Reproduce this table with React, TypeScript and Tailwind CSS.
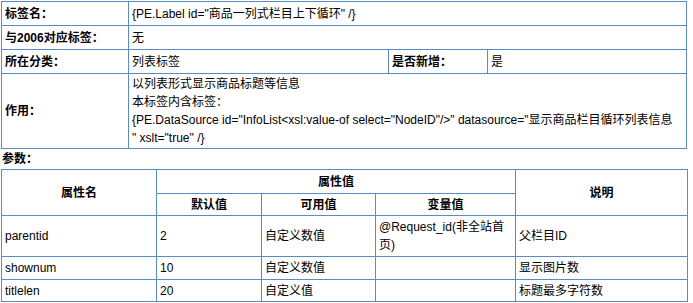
import React from "react";

const c = "border border-[#5b8cbf] px-[3px] align-middle";
const h = "border border-[#5b8cbf] px-[3px] align-middle text-center font-bold";

export default function App() {
  return (
    <div className="bg-white text-black font-['Liberation_Sans','Noto_Sans_CJK_SC',sans-serif] text-[12px] leading-[18px] pl-[1px] pt-[1px] w-[693px] h-[303px]">
      <table className="border-collapse table-fixed w-[685px]">
        <colgroup>
          <col className="w-[127px]" />
          <col className="w-[260px]" />
          <col className="w-[99px]" />
          <col className="w-[199px]" />
        </colgroup>
        <tbody>
          <tr className="h-[24px]">
            <td className={c + " font-bold"}>标签名：</td>
            <td className={c} colSpan={3}>{'{PE.Label id="商品一列式栏目上下循环" /}'}</td>
          </tr>
          <tr className="h-[24px]">
            <td className={c + " font-bold"}>与2006对应标签：</td>
            <td className={c} colSpan={3}>无</td>
          </tr>
          <tr className="h-[24px]">
            <td className={c + " font-bold"}>所在分类：</td>
            <td className={c}>列表标签</td>
            <td className={c + " font-bold"}>是否新增：</td>
            <td className={c}>是</td>
          </tr>
          <tr className="h-[74px]">
            <td className={c + " font-bold"}>作用：</td>
            <td className={c + " py-[1px]"} colSpan={3}>
              <div>以列表形式显示商品标题等信息</div>
              <div>本标签内含标签：</div>
              <div className="whitespace-nowrap">{'{PE.DataSource id="InfoList<xsl:value-of select="NodeID"/>" datasource="显示商品栏目循环列表信息'}</div>
              <div>{'" xslt="true" /}'}</div>
            </td>
          </tr>
        </tbody>
      </table>
      <div className="h-[20px] flex items-center font-bold pl-[1px]">参数：</div>
      <table className="border-collapse table-fixed w-[686px]">
        <colgroup>
          <col className="w-[155px]" />
          <col className="w-[105px]" />
          <col className="w-[114px]" />
          <col className="w-[140px]" />
          <col className="w-[172px]" />
        </colgroup>
        <tbody>
          <tr className="h-[24px]">
            <td className={h} rowSpan={2}>属性名</td>
            <td className={h} colSpan={3}>属性值</td>
            <td className={h} rowSpan={2}>说明</td>
          </tr>
          <tr className="h-[22px]">
            <td className={h}>默认值</td>
            <td className={h}>可用值</td>
            <td className={h}>变量值</td>
          </tr>
          <tr className="h-[41px]">
            <td className={c}>parentid</td>
            <td className={c}>2</td>
            <td className={c}>自定义数值</td>
            <td className={c}>@Request_id(非全站首页)</td>
            <td className={c}>父栏目ID</td>
          </tr>
          <tr className="h-[23px]">
            <td className={c}>shownum</td>
            <td className={c}>10</td>
            <td className={c}>自定义数值</td>
            <td className={c}></td>
            <td className={c}>显示图片数</td>
          </tr>
          <tr className="h-[22px]">
            <td className={c}>titlelen</td>
            <td className={c}>20</td>
            <td className={c}>自定义值</td>
            <td className={c}></td>
            <td className={c}>标题最多字符数</td>
          </tr>
        </tbody>
      </table>
    </div>
  );
}
